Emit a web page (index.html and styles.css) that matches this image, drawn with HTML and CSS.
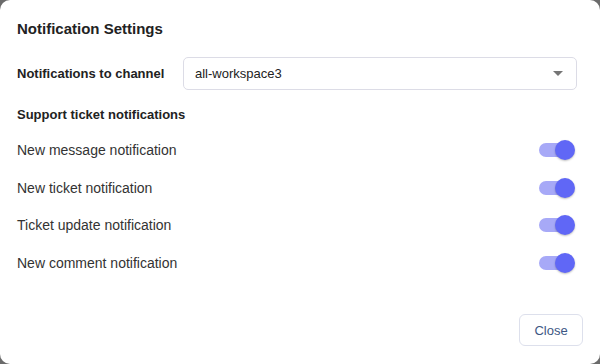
FILE: index.html
```html
<!DOCTYPE html>
<html>
<head>
<meta charset="utf-8">
<link rel="stylesheet" href="styles.css">
</head>
<body>
<div class="dialog">
  <h2 class="title">Notification Settings</h2>
  <div class="field">
    <label class="field-label">Notifications to channel</label>
    <div class="select">
      <span>all-workspace3</span>
      <svg class="caret" width="10" height="5" viewBox="0 0 10 5"><path d="M0 0 L10 0 L5 5 Z" fill="#757575"/></svg>
    </div>
  </div>
  <div class="section">Support ticket notifications</div>
  <div class="rows">
    <div class="row"><span>New message notification</span><span class="switch"><span class="track"></span><span class="knob"></span></span></div>
    <div class="row"><span>New ticket notification</span><span class="switch"><span class="track"></span><span class="knob"></span></span></div>
    <div class="row"><span>Ticket update notification</span><span class="switch"><span class="track"></span><span class="knob"></span></span></div>
    <div class="row"><span>New comment notification</span><span class="switch"><span class="track"></span><span class="knob"></span></span></div>
  </div>
  <div class="actions"><button class="close">Close</button></div>
</div>
</body>
</html>
```
FILE: styles.css
```css
html, body { margin: 0; padding: 0; }
body {
  width: 600px; height: 364px;
  background: #6b6b6b;
  font-family: "Liberation Sans", Arial, sans-serif;
  color: #333;
}
.dialog {
  width: 600px; height: 364px;
  box-sizing: border-box;
  background: #fff;
  border-radius: 10px;
  padding: 19px 17px 0 17px;
  display: flex; flex-direction: column;
}
.title {
  margin: 0;
  font-size: 15px; font-weight: bold; color: #222;
  line-height: 20px;
}
.field {
  display: flex; align-items: center;
  margin-top: 18px;
}
.field-label {
  font-size: 13px; font-weight: bold; color: #222;
  width: 166px;
}
.select {
  flex: 1;
  height: 33px; box-sizing: border-box;
  border: 1px solid #dcdce6; border-radius: 5px;
  display: flex; align-items: center; justify-content: space-between;
  padding: 0 13px 0 11px;
  font-size: 13px; color: #222;
  margin-right: 6px;
}
.section {
  margin-top: 17px;
  font-size: 13px; font-weight: bold; color: #222;
  line-height: 16px;
}
.rows { display: flex; flex-direction: column; margin-top: 8px; }
.row {
  display: flex; align-items: center; justify-content: space-between;
  height: 37.7px;
  font-size: 14px; color: #333;
}
.switch { position: relative; width: 40px; height: 24px; margin-right: 8px; }
.track {
  position: absolute; left: 4px; top: 5px; width: 30px; height: 14px;
  border-radius: 7px; background: #a7a9f7;
}
.knob {
  position: absolute; right: 0; top: 2px; width: 20px; height: 20px;
  border-radius: 50%; background: #6067f6;
  box-shadow: 0 1px 2px rgba(0,0,0,0.25);
}
.actions {
  margin-top: auto; display: flex; justify-content: flex-end;
  padding-bottom: 18px;
}
.close {
  font-family: inherit; font-size: 13px; color: #3d5784;
  background: #fff; border: 1px solid #dde0ec; border-radius: 6px;
  width: 64px; height: 32px; margin-right: 0;
}
```
